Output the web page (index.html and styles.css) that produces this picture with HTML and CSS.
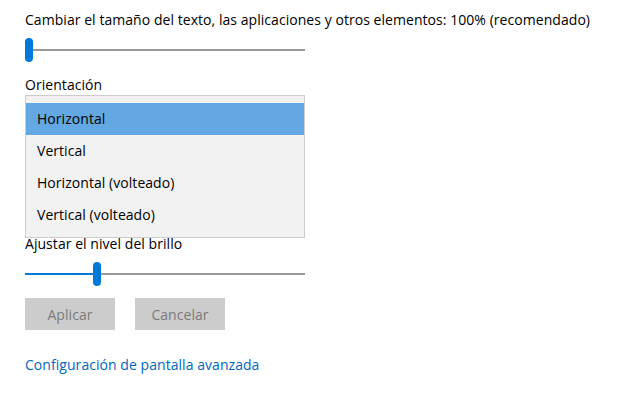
FILE: index.html
```html
<!DOCTYPE html>
<html lang="es">
<head>
<meta charset="utf-8">
<link rel="stylesheet" href="styles.css">
</head>
<body>
<div class="page">
  <div class="label first">Cambiar el tamaño del texto, las aplicaciones y otros elementos: 100% (recomendado)</div>
  <div class="slider">
    <div class="track"></div>
    <div class="fill" style="width:0px"></div>
    <div class="thumb" style="left:0px"></div>
  </div>
  <div class="label orient">Orientación</div>
  <div class="combo"></div>
  <div class="label bright">Ajustar el nivel del brillo</div>
  <div class="slider">
    <div class="track"></div>
    <div class="fill" style="width:70px"></div>
    <div class="thumb" style="left:68px"></div>
  </div>
  <div class="buttons">
    <button class="btn">Aplicar</button>
    <button class="btn">Cancelar</button>
  </div>
  <a class="link" href="#">Configuración de pantalla avanzada</a>

  <ul class="dropdown">
    <li class="item selected">Horizontal</li>
    <li class="item">Vertical</li>
    <li class="item">Horizontal (volteado)</li>
    <li class="item">Vertical (volteado)</li>
  </ul>
</div>
</body>
</html>
```
FILE: styles.css
```css
html, body {
  margin: 0;
  padding: 0;
  background: #ffffff;
}
body {
  font-family: "Open Sans", "Noto Sans", "Liberation Sans", sans-serif;
  font-size: 14px;
  letter-spacing: 0.05px;
  color: #000000;
}
.page {
  position: relative;
  width: 635px;
  height: 398px;
  padding-left: 25px;
  box-sizing: border-box;
  overflow: hidden;
}
.label {
  line-height: 20px;
  height: 20px;
  white-space: nowrap;
}
.label.first {
  padding-top: 10px;
}
.slider {
  position: relative;
  width: 280px;
  height: 24px;
  margin-top: 8px;
}
.track {
  position: absolute;
  left: 0;
  right: 0;
  top: 11px;
  height: 2px;
  background: #999999;
}
.fill {
  position: absolute;
  left: 0;
  top: 11px;
  height: 2px;
  background: #0078d7;
}
.thumb {
  position: absolute;
  top: 0;
  width: 8px;
  height: 24px;
  border-radius: 4px;
  background: #0078d7;
}
.label.orient {
  margin-top: 13px;
}
.combo {
  margin-top: 5px;
  width: 280px;
  height: 32px;
  box-sizing: border-box;
  border: 2px solid #999;
}
.label.bright {
  margin-top: 102px;
}
.slider + .buttons {
  margin-top: 12px;
}
.buttons {
  display: flex;
  gap: 20px;
}
.btn {
  width: 90px;
  height: 32px;
  border: 0;
  background: #cccccc;
  color: #7a7a7a;
  font-family: inherit;
  font-size: 14px;
  letter-spacing: 0.05px;
  padding: 0;
}
.link {
  display: block;
  margin-top: 25px;
  line-height: 20px;
  color: #0067c0;
  text-decoration: none;
  width: max-content;
}
.dropdown {
  position: absolute;
  left: 25px;
  top: 95px;
  width: 280px;
  height: 143px;
  box-sizing: border-box;
  margin: 0;
  padding: 7px 0 0 0;
  list-style: none;
  background: #f2f2f2;
  border: 1px solid #cccccc;
}
.item {
  height: 32px;
  line-height: 32px;
  padding-left: 11px;
  color: #000000;
}
.item.selected {
  background: #63a8e2;
}
```
